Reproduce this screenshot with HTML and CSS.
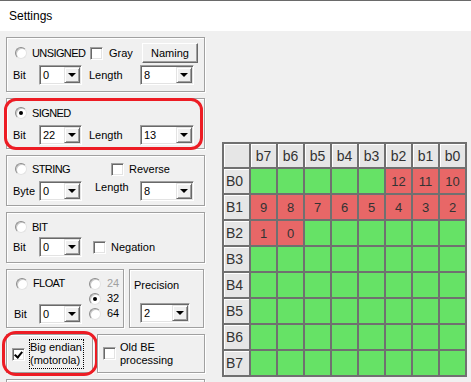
FILE: index.html
```html
<!DOCTYPE html>
<html lang="en">
<head>
    <meta charset="UTF-8">
    <title>Settings</title>
    <link rel="stylesheet" href="styles.css">
</head>
<body>
    <div class="titlebar">Settings</div>

    <div class="main">
        <div class="panel">
            <!-- UNSIGNED -->
            <div class="group g-unsigned">
                <div class="row row-top">
                    <span class="radio"></span>
                    <span class="lbl caps w-unsigned">UNSIGNED</span>
                    <span class="check"></span>
                    <span class="lbl w-gray">Gray</span>
                    <button class="btn">Naming</button>
                </div>
                <div class="row row-sel">
                    <span class="lbl lbl-bit">Bit</span>
                    <div class="combo w-sm"><span>0</span><i class="drop"></i></div>
                    <span class="lbl lbl-len">Length</span>
                    <div class="combo w-lg"><span>8</span><i class="drop"></i></div>
                </div>
            </div>

            <!-- SIGNED -->
            <div class="group g-signed marked">
                <div class="row row-top">
                    <span class="radio on"></span>
                    <span class="lbl caps">SIGNED</span>
                </div>
                <div class="row row-sel">
                    <span class="lbl lbl-bit">Bit</span>
                    <div class="combo w-sm"><span>22</span><i class="drop"></i></div>
                    <span class="lbl lbl-len">Length</span>
                    <div class="combo w-lg"><span>13</span><i class="drop"></i></div>
                </div>
            </div>

            <!-- STRING -->
            <div class="group g-string">
                <div class="row row-top">
                    <span class="radio"></span>
                    <span class="lbl caps w-string">STRING</span>
                    <span class="check"></span>
                    <span class="lbl">Reverse</span>
                </div>
                <div class="row row-sel">
                    <span class="lbl lbl-bit">Byte</span>
                    <div class="combo w-sm"><span>0</span><i class="drop"></i></div>
                    <span class="lbl lbl-len2">Length</span>
                    <div class="combo w-lg"><span>8</span><i class="drop"></i></div>
                </div>
            </div>

            <!-- BIT -->
            <div class="group g-bit">
                <div class="row row-top">
                    <span class="radio"></span>
                    <span class="lbl caps">BIT</span>
                </div>
                <div class="row row-sel">
                    <span class="lbl lbl-bit">Bit</span>
                    <div class="combo w-sm"><span>0</span><i class="drop"></i></div>
                    <span class="check neg"></span>
                    <span class="lbl">Negation</span>
                </div>
            </div>

            <!-- FLOAT + Precision -->
            <div class="pair">
                <div class="group g-float">
                    <div class="float-left">
                        <div class="row">
                            <span class="radio"></span>
                            <span class="lbl caps">FLOAT</span>
                        </div>
                        <div class="row row-fbit">
                            <span class="lbl lbl-fbit">Bit</span>
                            <div class="combo w-sm"><span>0</span><i class="drop"></i></div>
                        </div>
                    </div>
                    <div class="float-right">
                        <div class="row opt"><span class="radio"></span><span class="lbl off">24</span></div>
                        <div class="row opt"><span class="radio on"></span><span class="lbl">32</span></div>
                        <div class="row opt"><span class="radio"></span><span class="lbl">64</span></div>
                    </div>
                </div>
                <div class="group g-prec">
                    <span class="lbl">Precision</span>
                    <div class="combo w-prec"><span>2</span><i class="drop"></i></div>
                </div>
            </div>

            <!-- endianness -->
            <div class="pair">
                <div class="group g-big marked-big">
                    <span class="check on"></span>
                    <span class="lbl focus">Big endian<br>(motorola)</span>
                </div>
                <div class="group g-old">
                    <span class="check"></span>
                    <span class="lbl two">Old BE<br>processing</span>
                </div>
            </div>

            <div class="group g-last"></div>
        </div>

        <div class="bits">
            <div class="hd"></div>
            <div class="hd">b7</div><div class="hd">b6</div><div class="hd">b5</div><div class="hd">b4</div>
            <div class="hd">b3</div><div class="hd">b2</div><div class="hd">b1</div><div class="hd">b0</div>

            <div class="hd rh">B0</div>
            <div class="c"></div><div class="c"></div><div class="c"></div><div class="c"></div><div class="c"></div>
            <div class="c used">12</div><div class="c used">11</div><div class="c used">10</div>

            <div class="hd rh">B1</div>
            <div class="c used">9</div><div class="c used">8</div><div class="c used">7</div><div class="c used">6</div>
            <div class="c used">5</div><div class="c used">4</div><div class="c used">3</div><div class="c used">2</div>

            <div class="hd rh">B2</div>
            <div class="c used">1</div><div class="c used">0</div><div class="c"></div><div class="c"></div>
            <div class="c"></div><div class="c"></div><div class="c"></div><div class="c"></div>

            <div class="hd rh">B3</div>
            <div class="c"></div><div class="c"></div><div class="c"></div><div class="c"></div>
            <div class="c"></div><div class="c"></div><div class="c"></div><div class="c"></div>

            <div class="hd rh">B4</div>
            <div class="c"></div><div class="c"></div><div class="c"></div><div class="c"></div>
            <div class="c"></div><div class="c"></div><div class="c"></div><div class="c"></div>

            <div class="hd rh">B5</div>
            <div class="c"></div><div class="c"></div><div class="c"></div><div class="c"></div>
            <div class="c"></div><div class="c"></div><div class="c"></div><div class="c"></div>

            <div class="hd rh">B6</div>
            <div class="c"></div><div class="c"></div><div class="c"></div><div class="c"></div>
            <div class="c"></div><div class="c"></div><div class="c"></div><div class="c"></div>

            <div class="hd rh">B7</div>
            <div class="c"></div><div class="c"></div><div class="c"></div><div class="c"></div>
            <div class="c"></div><div class="c"></div><div class="c"></div><div class="c"></div>
        </div>
    </div>
</body>
</html>
```

FILE: styles.css
```css
body {
    margin: 0;
    background-color: #f0f0f0;
    font-family: "Liberation Sans", Arial, sans-serif;
    font-size: 11px;
    color: #000;
    overflow: hidden;
}
.titlebar {
    height: 30px;
    line-height: 30px;
    border-top: 1px solid #6a6a6a;
    background-color: #fff;
    padding-left: 9px;
    font-size: 12px;
}
.main {
    display: flex;
    align-items: flex-start;
    padding: 6px 0 0 6px;
}
.panel {
    width: 199px;
    display: flex;
    flex-direction: column;
    gap: 6px;
}

/* etched group boxes */
.group {
    position: relative;
    box-sizing: border-box;
    border: 1px solid #a0a0a0;
    box-shadow: inset 1px 1px 0 #fff, 1px 1px 0 #fff;
}
.g-unsigned { height: 55px; padding-top: 5px; }
.g-signed { height: 51px; padding-top: 4px; }
.g-string { height: 51px; padding-top: 3px; }
.g-bit { height: 51px; padding-top: 4px; }
.g-last { height: 3px; border-bottom: none; }

/* red annotation marks */
.marked::after,
.marked-big::after {
    content: "";
    position: absolute;
    border: 3px solid #ed1c24;
    border-radius: 12px;
    pointer-events: none;
}
.marked::after {
    left: -3px;
    top: -1px;
    right: 1px;
    bottom: -2px;
}
.marked-big::after {
    left: -5px;
    top: -4px;
    right: -6px;
    bottom: -4px;
    border-radius: 14px;
}

.row {
    display: flex;
    align-items: center;
}
.row-top {
    height: 20px;
}
.row-top .radio {
    margin-left: 8px;
}
.row-sel {
    margin-top: 2px;
}
.g-bit .row-sel {
    margin-top: 0;
}
.lbl {
    line-height: 13px;
    white-space: nowrap;
}
.radio + .lbl {
    margin-left: 5px;
}
.caps {
    letter-spacing: -0.6px;
}
.w-unsigned { width: 58px; }
.w-string { width: 79px; }
.check + .lbl { margin-left: 5px; }
.w-gray { width: 33px; margin-left: 6px !important; }
.lbl-bit { margin-left: 6px; width: 26px; }
.lbl-len { margin-left: 7px; width: 51px; }
.lbl-len2 { margin-left: 13px; width: 45px; align-self: flex-start; }
.neg { margin-left: 11px; }
.off { color: #a0a0a0; }

/* controls */
.radio {
    box-sizing: border-box;
    width: 12px;
    height: 12px;
    flex: none;
    border-radius: 50%;
    background-color: #fff;
    border: 1px solid;
    border-color: #8c8c8c #e3e3e3 #e3e3e3 #8c8c8c;
    box-shadow: inset 1px 1px 0 #c8c8c8;
    position: relative;
}
.radio.on::after {
    content: "";
    position: absolute;
    left: 3px;
    top: 3px;
    width: 4px;
    height: 4px;
    border-radius: 50%;
    background-color: #000;
}
.check {
    box-sizing: border-box;
    width: 13px;
    height: 13px;
    flex: none;
    background-color: #fff;
    border: 1px solid;
    border-color: #a0a0a0 #fff #fff #a0a0a0;
    box-shadow: inset 1px 1px 0 #696969, inset -1px -1px 0 #e3e3e3;
    position: relative;
}
.check.on::after {
    content: "";
    position: absolute;
    left: 3px;
    top: 1px;
    width: 3px;
    height: 6px;
    border: solid #000;
    border-width: 0 2px 2px 0;
    transform: rotate(40deg);
}
.btn {
    box-sizing: border-box;
    width: 56px;
    height: 20px;
    padding: 0;
    font-family: inherit;
    font-size: 11px;
    background-color: #f0f0f0;
    border: 1px solid;
    border-color: #fff #696969 #696969 #fff;
    box-shadow: inset -1px -1px 0 #a0a0a0;
}
.combo {
    box-sizing: border-box;
    display: flex;
    align-items: center;
    justify-content: space-between;
    height: 20px;
    background-color: #fff;
    border: 1px solid;
    border-color: #a0a0a0 #fff #fff #a0a0a0;
    box-shadow: inset 1px 1px 0 #696969, inset -1px -1px 0 #e3e3e3;
    padding: 1px 1px 1px 3px;
}
.combo span {
    line-height: 13px;
}
.drop {
    box-sizing: border-box;
    width: 16px;
    height: 16px;
    background-color: #f0f0f0;
    border: 1px solid;
    border-color: #e3e3e3 #696969 #696969 #e3e3e3;
    box-shadow: inset 1px 1px 0 #fff, inset -1px -1px 0 #a0a0a0;
    position: relative;
}
.drop::after {
    content: "";
    position: absolute;
    left: 3px;
    top: 5px;
    border-left: 4px solid transparent;
    border-right: 4px solid transparent;
    border-top: 4px solid #000;
}
.w-sm { width: 43px; }
.w-lg { width: 54px; }
.w-prec { width: 50px; }

/* float / precision pair */
.pair {
    display: flex;
}
.g-float {
    width: 118px;
    height: 59px;
    display: flex;
    padding-top: 6px;
}
.float-left {
    width: 82px;
    padding-top: 1px;
}
.float-left .radio {
    margin-left: 9px;
}
.row-fbit {
    margin-top: 14px;
}
.lbl-fbit { margin-left: 7px; width: 25px; }
.opt {
    height: 15px;
}
.opt .lbl {
    margin-left: 6px;
}
.g-prec {
    width: 75px;
    height: 59px;
    margin-left: 5px;
    padding: 9px 0 0 4px;
}
.g-prec .combo {
    margin: 11px 0 0 6px;
}

/* endianness pair */
.g-big {
    width: 87px;
    height: 39px;
    display: flex;
    align-items: center;
    padding-left: 5px;
}
.g-big .check { margin-top: 1px; }
.g-big .focus {
    margin-left: 4px;
    border: 1px dotted #000;
    padding: 1px 1px 1px 0;
}
.g-old {
    width: 108px;
    height: 39px;
    margin-left: 4px;
    display: flex;
    align-items: center;
    padding-left: 5px;
}
.g-old .lbl {
    margin-left: 4px;
}

/* byte / bit grid */
.bits {
    margin: 105px 0 0 17px;
    display: grid;
    grid-template-columns: repeat(9, 25px);
    grid-template-rows: 23px repeat(8, 24px);
    gap: 2px;
    padding: 2px;
    background-color: #707070;
    font-size: 14px;
    color: #333;
}
.hd {
    background-color: #e6e6e6;
    box-shadow: inset 1px 1px 0 #fff;
    display: flex;
    align-items: center;
    justify-content: center;
}
.hd.rh {
    justify-content: flex-start;
    padding-left: 2px;
}
.c {
    background-color: #66e266;
    display: flex;
    align-items: center;
    justify-content: center;
    font-size: 13px;
}
.c.used {
    background-color: #e86767;
}
```
